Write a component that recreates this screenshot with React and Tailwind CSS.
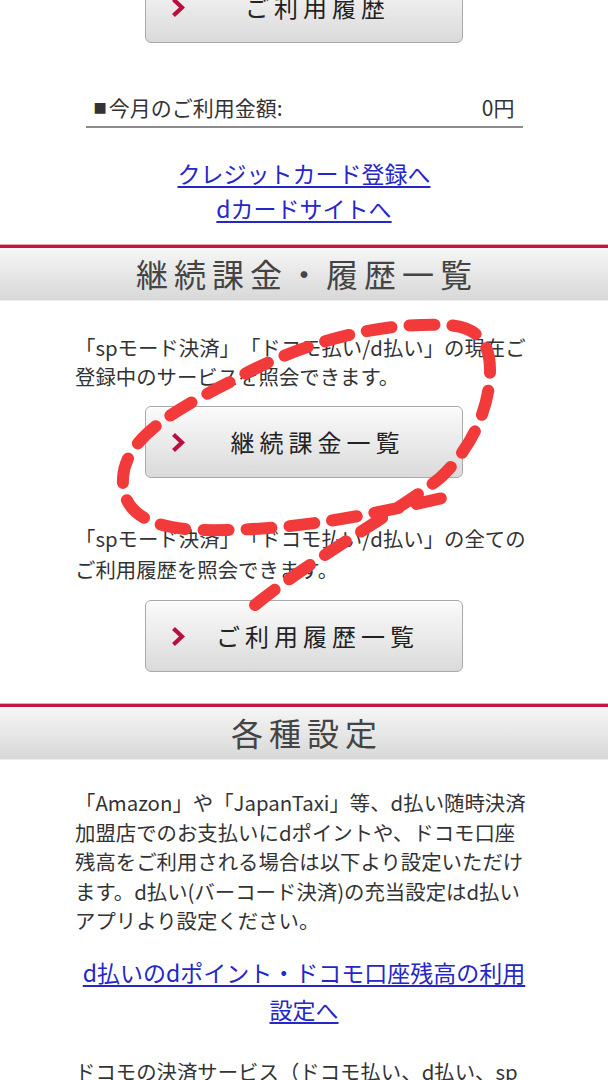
import React from 'react';

const font = "font-['Noto_Sans_CJK_JP','Noto_Sans',sans-serif]";

const Chevron = () => (
  <svg width="14" height="21" viewBox="0 0 14 21" className="shrink-0">
    <path d="M2.5 2.5 L11 10.5 L2.5 18.5" fill="none" stroke="#bd0d3d" strokeWidth="4.2" />
  </svg>
);

function MenuButton({ label, className = '' }) {
  return (
    <div
      className={`mx-auto flex h-[72px] w-[318px] items-center rounded-[6px] border border-[#a9a9a9] bg-linear-to-b from-[#fbfbfb] to-[#dadada] pl-[25px] pr-[17px] shadow-[inset_0_1px_0_#ffffff] ${className}`}
    >
      <Chevron />
      <span className="flex-1 pl-[5px] text-center text-[24px] leading-none tracking-[5px] text-[#222]">
        {label}
      </span>
    </div>
  );
}

function SectionHeader({ title, className = '' }) {
  return (
    <div className={className}>
      <div className="h-[4px] border-t border-[#e8a6b5] bg-[#c4163f]" />
      <div className="flex h-[53px] items-center justify-center border-b border-[#ededed] bg-linear-to-b from-[#f6f6f6] to-[#d8d8d8] pb-[3px] pl-[6px] text-[32px] leading-none tracking-[6px] text-[#444]">
        {title}
      </div>
    </div>
  );
}

export default function App() {
  return (
    <div className={`relative h-[1080px] w-[608px] overflow-hidden bg-white ${font}`}>
      <MenuButton label="ご利用履歴" className="mt-[-29px]" />

      {/* 今月のご利用金額 */}
      <div className="mx-auto mt-[49px] flex h-[36px] w-[437px] items-start justify-between border-b-2 border-[#8c8c8c] pl-[8px] pr-[8px] text-[21px] leading-[30px] text-[#333]">
        <span className="flex items-center">
          <span className="mr-[2px] font-['DejaVu_Sans',sans-serif] text-[14px] leading-none">■</span>
          今月のご利用金額:
        </span>
        <span>0円</span>
      </div>

      <div className="mt-[28px] flex flex-col items-center text-[23px] leading-[35px] text-[#2626c9]">
        <a className="underline underline-offset-[3px]">クレジットカード登録へ</a>
        <a className="underline underline-offset-[3px]">dカードサイトへ</a>
      </div>

      <SectionHeader title="継続課金・履歴一覧" className="mt-[18px]" />

      <p className="mx-[75px] mt-[32px] whitespace-nowrap text-[20.4px] leading-[29px] text-[#333] [text-spacing-trim:space-all]">
        「spモード決済」「ドコモ払い/d払い」の現在ご
        <br />
        登録中のサービスを照会できます。
      </p>

      <MenuButton label="継続課金一覧" className="mt-[15px]" />

      <p className="mx-[75px] mt-[45px] whitespace-nowrap text-[20.4px] leading-[31px] text-[#333] [text-spacing-trim:space-all]">
        「spモード決済」「ドコモ払い/d払い」の全ての
        <br />
        ご利用履歴を照会できます。
      </p>

      <MenuButton label="ご利用履歴一覧" className="mt-[15px]" />

      <SectionHeader title="各種設定" className="mt-[31px]" />

      <p className="mx-[75px] mt-[28px] whitespace-nowrap text-[20.4px] leading-[29.5px] text-[#333]">
        「Amazon」や「JapanTaxi」等、d払い随時決済
        <br />
        加盟店でのお支払いにdポイントや、ドコモ口座
        <br />
        残高をご利用される場合は以下より設定いただけ
        <br />
        ます。d払い(バーコード決済)の充当設定はd払い
        <br />
        アプリより設定ください。
      </p>

      <div className="mt-[18px] flex flex-col items-center text-[23px] leading-[37px] text-[#2626c9]">
        <a className="text-center underline underline-offset-[3px]">
          d払いのdポイント・ドコモ口座残高の利用
          <br />
          設定へ
        </a>
      </div>

      <p className="mx-[75px] mt-[28px] whitespace-nowrap text-[20.4px] leading-[30px] text-[#333]">
        ドコモの決済サービス（ドコモ払い、d払い、sp
      </p>

      {/* hand-drawn annotation */}
      <svg
        className="pointer-events-none absolute left-0 top-0"
        width="608"
        height="1080"
        viewBox="0 0 608 1080"
      >
        <path
          d="M255 605 C310 560, 400 510, 440 478 C470 450, 490 410, 490 370 C490 340, 475 326, 445 325 C380 322, 300 342, 230 382 C170 412, 125 440, 123 478 C121 510, 145 528, 200 530 C300 532, 380 512, 447 497"
          fill="none"
          stroke="#f23a3a"
          strokeWidth="12"
          strokeLinecap="round"
          strokeDasharray="25 18"
        />
      </svg>
    </div>
  );
}
